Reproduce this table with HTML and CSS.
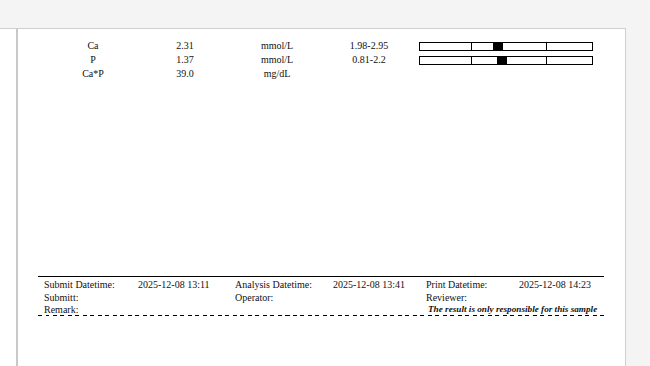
FILE: index.html
```html
<!DOCTYPE html>
<html>
<head>
<meta charset="utf-8">
<link rel="stylesheet" href="styles.css">
</head>
<body>
<div class="viewer">
  <div class="page">
    <div class="results">
      <div class="row">
        <span>Ca</span><span>2.31</span><span>mmol/L</span><span>1.98-2.95</span>
        <div class="bar"><span class="seg s1"></span><span class="seg s2"></span><span class="seg s3"></span><span class="mark" style="left:73px"></span></div>
      </div>
      <div class="row">
        <span>P</span><span>1.37</span><span>mmol/L</span><span>0.81-2.2</span>
        <div class="bar"><span class="seg s1"></span><span class="seg s2"></span><span class="seg s3"></span><span class="mark" style="left:77px"></span></div>
      </div>
      <div class="row">
        <span>Ca*P</span><span>39.0</span><span>mg/dL</span><span></span>
      </div>
    </div>
    <div class="footer">
      <div class="line l1">
        <span>Submit Datetime:</span><span>2025-12-08 13:11</span>
        <span>Analysis Datetime:</span><span>2025-12-08 13:41</span>
        <span>Print Datetime:</span><span>2025-12-08 14:23</span>
      </div>
      <div class="line l2">
        <span>Submitt:</span><span></span>
        <span>Operator:</span><span></span>
        <span>Reviewer:</span><span></span>
      </div>
      <div class="line l3">
        <span>Remark:</span>
        <span class="note">The result is only responsible for this sample</span>
      </div>
      <div class="dash"></div>
    </div>
  </div>
</div>
</body>
</html>
```
FILE: styles.css
```css
html, body {
  margin: 0;
  height: 100%;
}
body {
  background: #f4f4f4;
  font-family: "Liberation Serif", "Times New Roman", serif;
  color: #111;
  overflow: hidden;
}
.viewer {
  margin-top: 28px;
  width: 626px;
  height: 338px;
  box-sizing: border-box;
  background: #fff;
  border-top: 1px solid #cfcfcf;
  border-right: 1px solid #cfcfcf;
  padding-left: 16px;
}
.page {
  height: 100%;
  box-sizing: border-box;
  border-left: 2px solid #c8c8c8;
  padding-top: 10px;
}
.results {
  margin-left: 29px;
}
.row {
  display: grid;
  grid-template-columns: repeat(4, 92px) 178px;
  height: 14px;
  line-height: 14px;
  font-size: 10px;
  text-align: center;
}
.bar {
  position: relative;
  display: flex;
  align-self: start;
  margin: 3px 0 0 4px;
  width: 174px;
  height: 9px;
  box-sizing: border-box;
  border: 1px solid #000;
}
.seg {
  box-sizing: border-box;
  height: 100%;
}
.s1 { width: 52px; border-right: 1px solid #000; }
.s2 { width: 75px; border-right: 1px solid #000; }
.s3 { flex: 1; }
.mark {
  position: absolute;
  top: 0;
  bottom: 0;
  width: 10px;
  background: #000;
}
.footer {
  margin: 195px 0 0 20px;
  width: 566px;
  border-top: 1px solid #000;
}
.line {
  display: grid;
  grid-template-columns: 94px 97px 98px 93px 93px 1fr;
  padding-left: 6px;
  font-size: 10px;
  white-space: nowrap;
}
.l1 { line-height: 15px; }
.l2 { line-height: 12px; }
.l3 { line-height: 11px; }
.note {
  grid-column: 5 / span 2;
  padding-left: 2px;
  font-size: 9.2px;
  font-weight: bold;
  font-style: italic;
}
.dash {
  height: 1px;
  background: repeating-linear-gradient(90deg, #000 0 4px, transparent 4px 7.5px);
}
```
